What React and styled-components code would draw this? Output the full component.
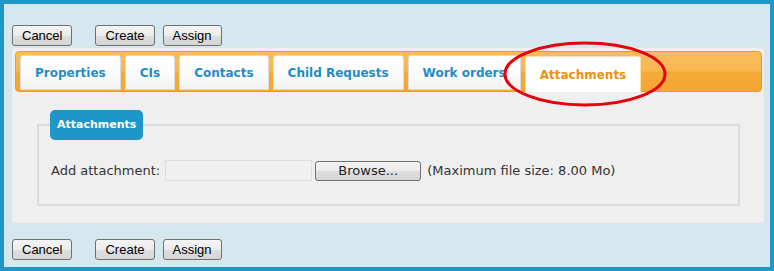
import React from "react";
import styled, { createGlobalStyle } from "styled-components";

const Global = createGlobalStyle`
  html, body { margin: 0; padding: 0; }
  body { font-family: "DejaVu Sans", Verdana, sans-serif; }
  * { box-sizing: border-box; }
`;

const Frame = styled.div`
  width: 774px;
  height: 271px;
  border: 4px solid #1f97c9;
  background: #d5e8f0;
  padding: 21px 5px 0 7px;
  display: flex;
  flex-direction: column;
`;

const ButtonRow = styled.div`
  display: flex;
  align-items: center;
  margin-left: 1px;
  margin-top: ${(p) => p.$top || 0}px;
`;

const Btn = styled.button`
  height: 21px;
  padding: 0 9px;
  margin: 0;
  margin-right: ${(p) => p.$gap || 0}px;
  border: 1px solid #707070;
  border-radius: 3px;
  background: linear-gradient(#f4f4f4 0%, #ececec 50%, #dedede 51%, #d6d6d6 100%);
  font-family: "Liberation Sans", Arial, sans-serif;
  font-size: 13px;
  color: #000;
  line-height: 19px;
  cursor: pointer;
`;

const Panel = styled.div`
  margin-top: 1px;
  height: 177px;
  background: #efefef;
  border: 1px solid #e2e2e2;
  border-radius: 4px;
  padding: 3px 2px 0 3px;
`;

const TabBar = styled.div`
  position: relative;
  height: 41px;
  display: flex;
  align-items: flex-end;
  gap: 4px;
  padding: 0 2px 0 4px;
  border: 1px solid #ec9c24;
  border-radius: 4px;
  background: linear-gradient(#f9bc5e 0%, #f8b752 48%, #f5ab38 52%, #f4a631 100%);
`;

const Tab = styled.div`
  height: ${(p) => (p.$active ? 36 : 35)}px;
  margin-bottom: ${(p) => (p.$active ? -1 : 1)}px;
  padding: 1px 14px 0;
  display: flex;
  align-items: center;
  border: 1px solid ${(p) => (p.$active ? "#fde2a6" : "#dcdcdc")};
  border-bottom: ${(p) => (p.$active ? "none" : "1px solid #dcdcdc")};
  border-radius: 3px 3px 0 0;
  background: ${(p) =>
    p.$active ? "#ffffff" : "linear-gradient(#ffffff 0%, #fbfbfb 60%, #f1f1f1 100%)"};
  font-family: "DejaVu Sans", Verdana, sans-serif;
  font-weight: bold;
  font-size: 12px;
  color: ${(p) => (p.$active ? "#f0900f" : "#1f8dc5")};
  white-space: nowrap;
`;

const Circle = styled.svg`
  position: absolute;
  left: 485px;
  top: -11px;
  pointer-events: none;
`;

const Fieldset = styled.fieldset`
  margin: 18px 22px 0 22px;
  padding: 0 12px 23px 11px;
  border: 2px solid #dcdcdc;
  min-width: 0;
`;

const Legend = styled.legend`
  padding: 0 7px;
  height: 30px;
  line-height: 30px;
  background: #1e96c8;
  border-radius: 5px;
  color: #fff;
  font-family: "DejaVu Sans", Verdana, sans-serif;
  font-weight: bold;
  font-size: 11px;
`;

const Row = styled.div`
  margin-top: 20px;
  display: flex;
  align-items: center;
  font-family: "DejaVu Sans", Verdana, sans-serif;
  font-size: 13px;
  color: #333;
  margin-left: 1px;
`;

const FileInput = styled.div`
  width: 147px;
  height: 21px;
  margin-left: 5px;
  border: 1px solid #d9dfe6;
  background: #f0f0f0;
`;

const Browse = styled.button`
  height: 20px;
  width: 106px;
  margin: 0 6px 0 3px;
  padding: 0;
  border: 1px solid #707070;
  border-radius: 3px;
  background: linear-gradient(#f4f4f4 0%, #ececec 50%, #dedede 51%, #d6d6d6 100%);
  font-family: "DejaVu Sans", Verdana, sans-serif;
  font-size: 13px;
  color: #222;
  line-height: 18px;
`;

const tabs = ["Properties", "CIs", "Contacts", "Child Requests", "Work orders", "Attachments"];

function Buttons({ top }) {
  return (
    <ButtonRow $top={top}>
      <Btn $gap={23}>Cancel</Btn>
      <Btn $gap={8}>Create</Btn>
      <Btn>Assign</Btn>
    </ButtonRow>
  );
}

export default function App() {
  return (
    <>
      <Global />
      <Frame>
        <Buttons />
        <Panel>
          <TabBar>
            {tabs.map((t) => (
              <Tab key={t} $active={t === "Attachments"}>
                {t}
              </Tab>
            ))}
            <Circle width="170" height="68" viewBox="0 0 170 68">
              <ellipse cx="84" cy="33" rx="80" ry="31" fill="none" stroke="#e8000b" strokeWidth="3" />
            </Circle>
          </TabBar>
          <Fieldset>
            <Legend>Attachments</Legend>
            <Row>
              <span>Add attachment:</span>
              <FileInput />
              <Browse>Browse...</Browse>
              <span>(Maximum file size: 8.00 Mo)</span>
            </Row>
          </Fieldset>
        </Panel>
        <Buttons top={15} />
      </Frame>
    </>
  );
}
